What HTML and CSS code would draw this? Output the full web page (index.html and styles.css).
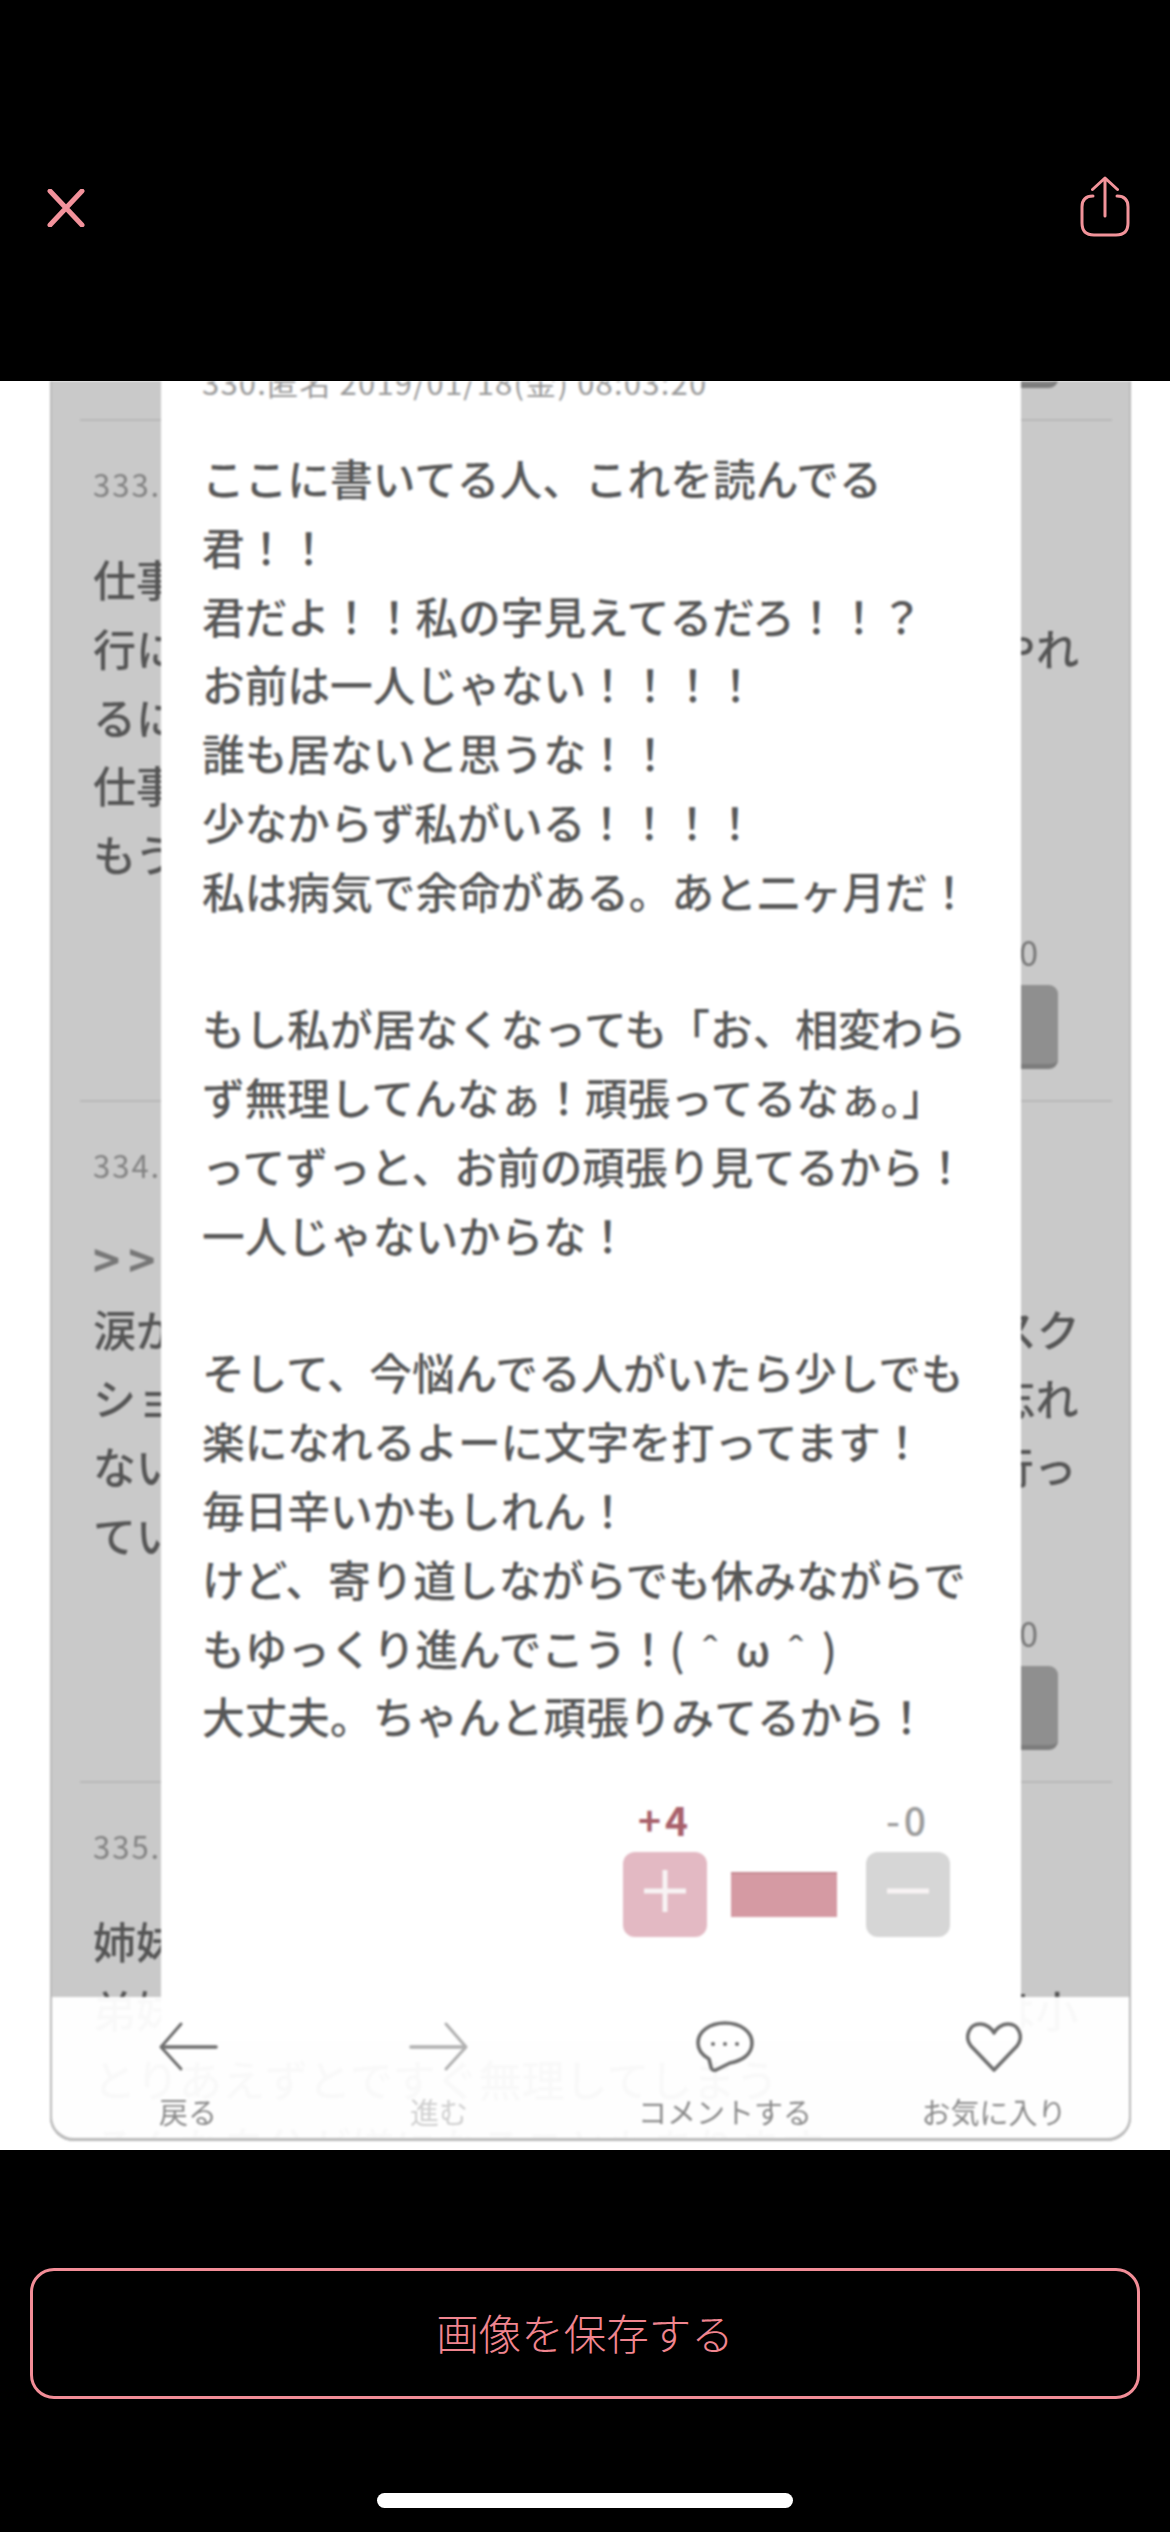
FILE: index.html
```html
<!DOCTYPE html>
<html lang="ja">
<head>
<meta charset="utf-8">
<title>画像を保存する</title>
<link rel="stylesheet" href="styles.css">
</head>
<body>
<header class="topbar">
  <svg class="icon-close" viewBox="0 0 38 38"><path d="M3 2 L35 36 M35 2 L3 36"/></svg>
  <svg class="icon-share" viewBox="0 0 50 62"><path d="M25 40 V2 M12.5 13.5 L25 2 L37.5 13.5 M13 20 Q2 20 2 31 V47 Q2 59 14 59 H36 Q48 59 48 47 V31 Q48 20 37 20"/></svg>
</header>

<main class="shot">
  <div class="frame">
    <div class="list">
      <section class="row row-cut">
        <div class="vote"><span class="vote-btn"></span></div>
      </section>
      <section class="row">
        <div class="no">333.匿名 2019/01/18(金) 09:12:44</div>
        <p class="post">仕事で毎日つらいことばかりで疲れた<br>行に行かされるたびに毎日が本当に嫌で、もうやれ<br>るに決まってると言われても無理です<br>仕事を辞めたいと毎朝思っています<br>もう限界かもしれない</p>
        <div class="vote"><span class="vote-count">-0</span><span class="vote-btn"></span></div>
      </section>
      <section class="row">
        <div class="no">334.匿名 2019/01/18(金) 09:40:02</div>
        <p class="post"><span class="quote">&gt;&gt;330</span><br>涙が出ました。この言葉に救われたので画面をスク<br>ショットして保存しました。つらい時に読んで忘れ<br>ないようにします。明日からまた元気に仕事に行っ<br>ていきます。</p>
        <div class="vote"><span class="vote-count">-0</span><span class="vote-btn"></span></div>
      </section>
      <section class="row">
        <div class="no">335.匿名 2019/01/18(金) 10:05:31</div>
        <p class="post">姉妹がいるけど誰にも相談できません<br>弟妹の世話もあって毎日が忙しくて自分のことは小<br>とりあえずとですぐ無理してしまう<br>そんな自分が嫌になることもあります</p>
      </section>
    </div>

    <article class="modal">
      <div class="modal-meta">330.匿名 2019/01/18(金) 08:03:20</div>
      <p class="modal-body">ここに書いてる人、これを読んでる<br>君！！<br>君だよ！！私の字見えてるだろ！！？<br>お前は一人じゃない！！！！<br>誰も居ないと思うな！！<br>少なからず私がいる！！！！<br>私は病気で余命がある。あと二ヶ月だ！<br><br>もし私が居なくなっても「お、相変わら<br>ず無理してんなぁ！頑張ってるなぁ。」<br>ってずっと、お前の頑張り見てるから！<br>一人じゃないからな！<br><br>そして、今悩んでる人がいたら少しでも<br>楽になれるよーに文字を打ってます！<br>毎日辛いかもしれん！<br>けど、寄り道しながらでも休みながらで<br>もゆっくり進んでこう！<span class="kaomoji">( ˆ ω ˆ )</span><br>大丈夫。ちゃんと頑張りみてるから！</p>
      <div class="score">
        <div class="score-col">
          <span class="score-num score-plus">+4</span>
          <span class="score-btn score-btn-plus">
            <svg class="score-glyph" viewBox="0 0 44 44"><path d="M22 1 V43 M1 22 H43"/></svg>
          </span>
        </div>
        <span class="score-bar"></span>
        <div class="score-col">
          <span class="score-num">-0</span>
          <span class="score-btn score-btn-minus">
            <svg class="score-glyph" viewBox="0 0 44 44"><path d="M1 22 H43"/></svg>
          </span>
        </div>
      </div>
    </article>

    <nav class="tabbar">
      <div class="tab">
        <svg class="tab-icon" viewBox="0 0 58 52"><path class="thin" d="M22 3 L2 26 L22 48"/><path class="thick" d="M3 26 H57"/></svg>
        <span>戻る</span>
      </div>
      <div class="tab tab-off">
        <svg class="tab-icon" viewBox="0 0 58 52"><path class="thin" d="M36 3 L56 26 L36 48"/><path class="thick" d="M1 26 H55"/></svg>
        <span>進む</span>
      </div>
      <div class="tab">
        <svg class="tab-icon" viewBox="0 0 58 52"><path class="thick" d="M29 2 C45 2 56 11 56 22 C56 34 45 40 34 42 L20 49 C17 50 15 48 15 46 L13 38 C6 34 2 29 2 22 C2 11 13 2 29 2 Z"/><circle cx="17" cy="23" r="2"/><circle cx="29" cy="23" r="2"/><circle cx="41" cy="23" r="2"/></svg>
        <span>コメントする</span>
      </div>
      <div class="tab">
        <svg class="tab-icon" viewBox="0 0 58 52"><path class="thick" d="M29 49 L6 25 C-1 16 4 3 15 3 C22 3 27 8 29 12 C31 8 36 3 43 3 C54 3 59 16 52 25 Z"/></svg>
        <span>お気に入り</span>
      </div>
    </nav>
  </div>
</main>

<footer class="bottom">
  <button class="save">画像を保存する</button>
  <div class="home"></div>
</footer>
</body>
</html>
```

FILE: styles.css
```css
* { box-sizing: border-box; }
html, body { margin: 0; padding: 0; background: #000; }
body {
  width: 1170px;
  height: 2532px;
  overflow: hidden;
  display: flex;
  flex-direction: column;
  font-family: "Noto Sans CJK JP", "Liberation Sans", sans-serif;
}

/* top bar */
.topbar {
  height: 381px;
  flex: none;
  display: flex;
  justify-content: space-between;
  padding: 176px 40px 0 47px;
}
.icon-close { width: 38px; height: 38px; margin-top: 13px; }
.icon-close path { fill: none; stroke: #f2929b; stroke-width: 5; stroke-linecap: round; }
.icon-share { width: 50px; height: 62px; }
.icon-share path { fill: none; stroke: #f2939a; stroke-width: 3; stroke-linecap: round; stroke-linejoin: round; }

/* screenshot area */
.shot {
  flex: none;
  height: 1769px;
  background: #fff;
  padding: 0 39px 9px 50px;
  overflow: hidden;
}
.frame {
  position: relative;
  height: 100%;
  overflow: hidden;
  background: #c9c9c9;
  border-radius: 0 0 24px 24px;
  box-shadow: inset 2px 0 0 #b9b9b9, inset -2px 0 0 #b9b9b9, inset 0 -3px 0 #b5b5b5;
  filter: blur(1.2px);
}

/* background list */
.list { display: flex; flex-direction: column; }
.row {
  flex: none;
  height: 681px;
  margin: 0 19px 0 30px;
  padding: 43px 54px 31px 13px;
  border-bottom: 2px solid #b8b8b8;
  display: flex;
  flex-direction: column;
}
.row-cut { height: 40px; padding-top: 0; justify-content: flex-end; }
.row:last-child { border-bottom: 0; height: auto; }
.no { font-size: 31px; line-height: 40px; letter-spacing: 2px; color: #828282; white-space: nowrap; }
.post {
  margin: 40px 0 0;
  font-size: 43px;
  line-height: 68.8px;
  font-weight: 500;
  color: #555;
  white-space: nowrap;
}
.quote { color: #777; font-size: 46px; letter-spacing: 8px; font-weight: 700; line-height: 60px; }
.vote {
  margin-top: auto;
  display: flex;
  flex-direction: column;
  align-items: flex-end;
  flex: none;
}
.vote-count {
  font-size: 34px;
  line-height: 44px;
  color: #777;
  margin: 0 20px 11px 0;
}
.vote-btn {
  display: block;
  flex: none;
  width: 83px;
  height: 84px;
  background: #8f8f8f;
  border-bottom: 5px solid #7d7d7d;
  border-radius: 9px;
}

/* modal */
.modal {
  position: absolute;
  top: -40px;
  left: 111px;
  width: 860px;
  height: 1700px;
  background: #fff;
  padding: 21px 0 0 41px;
}
.modal-meta {
  font-size: 31px;
  line-height: 40px;
  letter-spacing: 1.2px;
  color: #9a9a9a;
  white-space: nowrap;
}
.modal-body {
  margin: 41px 0 0;
  font-size: 42.7px;
  line-height: 68.8px;
  font-weight: 500;
  color: #575757;
  white-space: nowrap;
}
.kaomoji { letter-spacing: 4.5px; }
.score {
  margin: 47px 0 0 421px;
  display: flex;
  align-items: flex-end;
  gap: 24px;
}
.score-col { display: flex; flex-direction: column; align-items: center; width: 84px; }
.score-num {
  font-size: 39px;
  line-height: 44px;
  letter-spacing: 4px;
  font-weight: 500;
  color: #9c9c9c;
  margin-bottom: 11px;
}
.score-plus { color: #a8606a; font-weight: 700; }
.score-btn {
  width: 84px;
  height: 85px;
  border-radius: 12px;
  display: flex;
  align-items: center;
  justify-content: center;
  padding-bottom: 7px;
}
.score-btn-plus { background: #e3b9c3; }
.score-btn-minus { background: #d6d6d6; }
.score-glyph { width: 44px; height: 44px; }
.score-glyph path { fill: none; stroke: #f8f3f4; stroke-width: 5; }
.score-bar {
  width: 106px;
  height: 45px;
  background: #d59aa3;
  border-top: 2px solid #c58a93;
  margin: 0 5px 20px 0;
  flex: none;
}

/* tab bar */
.tabbar {
  position: absolute;
  left: 0;
  right: 0;
  bottom: 0;
  height: 144px;
  padding: 24px 41px 0 0;
  display: grid;
  grid-template-columns: 272px 230px 342px 196px;
  background: rgba(255, 255, 255, 0.97);
  border-radius: 0 0 24px 24px;
  border: solid #b9b9b9;
  border-width: 0 2px 3px;
}
.tab {
  display: flex;
  flex-direction: column;
  align-items: center;
  font-size: 29px;
  line-height: 40px;
  color: #8a8a8a;
}
.tab-icon { width: 58px; height: 52px; margin-bottom: 18px; flex: none; overflow: visible; }
.tab-icon path { fill: none; stroke: #6e6e6e; stroke-linecap: round; stroke-linejoin: round; }
.tab-icon circle { fill: #6e6e6e; }
.tab-icon .thin { stroke-width: 3; }
.tab-icon .thick { stroke-width: 3.6; }
.tab-off { color: #cfcfcf; }
.tab-off .tab-icon path { stroke: #b0b0b0; }

/* bottom */
.bottom {
  flex: 1;
  display: flex;
  flex-direction: column;
  align-items: center;
  padding-top: 118px;
}
.save {
  width: 1110px;
  height: 131px;
  background: #000;
  border: 3px solid #f28d97;
  border-radius: 24px;
  color: #f0858f;
  font-family: inherit;
  font-size: 42.5px;
  font-weight: 300;
  padding: 0 0 4px;
}
.home {
  width: 416px;
  height: 15px;
  margin-top: 94px;
  background: #fff;
  border-radius: 8px;
}
```
